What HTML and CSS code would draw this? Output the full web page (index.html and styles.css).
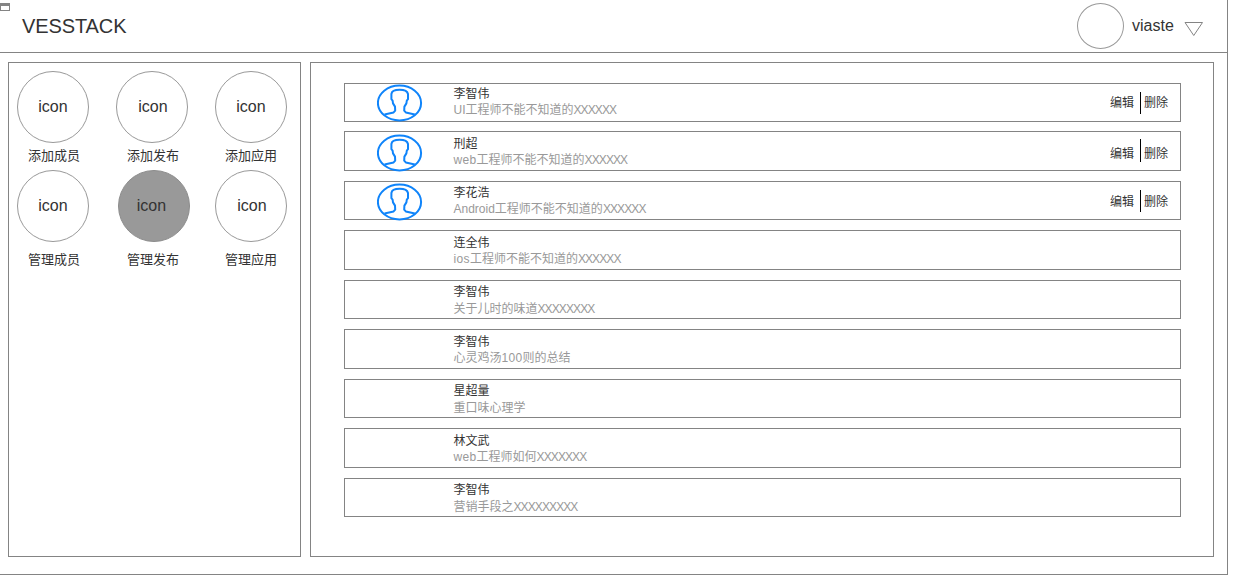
FILE: index.html
```html
<!DOCTYPE html>
<html lang="zh-CN">
<head>
<meta charset="utf-8">
<title>VESSTACK</title>
<link rel="stylesheet" href="styles.css">
</head>
<body>
<svg width="0" height="0" class="defs">
  <symbol id="person" viewBox="0 0 46 38">
    <g fill="none" stroke="#0f84fa" stroke-width="2" stroke-linejoin="round">
      <ellipse cx="22.5" cy="19" rx="21.6" ry="17.4"/>
      <path d="M7.5 30.4 L16.6 28.4 L18.2 26.6 L18 22.6 L16 19.4 L15.6 16.6 L14.4 15.2 L14.4 10 C14.8 7 17.6 5.8 22.6 5.8 C27.6 5.8 30.4 7 31 10 L31 15.2 L29.8 16.6 L29.4 19.4 L27.4 22.6 L27.2 26.6 L28.8 28.4 L37.8 30.4"/>
    </g>
  </symbol>
</svg>
<div class="window">
  <header class="header">
    <span class="window-mark"></span>
    <h1 class="brand">VESSTACK</h1>
    <div class="user">
      <span class="user-avatar"></span>
      <span class="user-name">viaste</span>
      <svg class="caret" width="20" height="16" viewBox="0 0 20 16"><path d="M1 1.5H18.5L9.75 14.5Z" fill="none" stroke="#848484"/></svg>
    </div>
  </header>
  <div class="content">
    <nav class="sidebar">
      <a class="tile"><span class="circle">icon</span><span class="label">添加成员</span></a>
      <a class="tile"><span class="circle nudge">icon</span><span class="label">添加发布</span></a>
      <a class="tile"><span class="circle">icon</span><span class="label">添加应用</span></a>
      <a class="tile"><span class="circle">icon</span><span class="label">管理成员</span></a>
      <a class="tile active"><span class="circle">icon</span><span class="label">管理发布</span></a>
      <a class="tile"><span class="circle nudge">icon</span><span class="label">管理应用</span></a>
    </nav>
    <main class="main">
      <article class="row">
        <svg class="avatar"><use href="#person"/></svg>
        <div class="text"><div class="name">李智伟</div><div class="desc">UI工程师不能不知道的<span class="x">XXXXXX</span></div></div>
        <div class="actions"><a>编辑</a><i class="divider"></i><a>删除</a></div>
      </article>
      <article class="row">
        <svg class="avatar"><use href="#person"/></svg>
        <div class="text"><div class="name">刑超</div><div class="desc"><span class="latin">web</span>工程师不能不知道的<span class="x">XXXXXX</span></div></div>
        <div class="actions"><a>编辑</a><i class="divider"></i><a>删除</a></div>
      </article>
      <article class="row">
        <svg class="avatar"><use href="#person"/></svg>
        <div class="text"><div class="name">李花浩</div><div class="desc">Android工程师不能不知道的<span class="x">XXXXXX</span></div></div>
        <div class="actions"><a>编辑</a><i class="divider"></i><a>删除</a></div>
      </article>
      <article class="row">
        <div class="text"><div class="name">连全伟</div><div class="desc"><span class="latin">ios</span>工程师不能不知道的<span class="x">XXXXXX</span></div></div>
      </article>
      <article class="row">
        <div class="text"><div class="name">李智伟</div><div class="desc">关于儿时的味道<span class="x">XXXXXXXX</span></div></div>
      </article>
      <article class="row">
        <div class="text"><div class="name">李智伟</div><div class="desc">心灵鸡汤<span class="latin">100</span>则的总结</div></div>
      </article>
      <article class="row">
        <div class="text"><div class="name">星超量</div><div class="desc">重口味心理学</div></div>
      </article>
      <article class="row">
        <div class="text"><div class="name">林文武</div><div class="desc"><span class="latin">web</span>工程师如何<span class="x">XXXXXXX</span></div></div>
      </article>
      <article class="row">
        <div class="text"><div class="name">李智伟</div><div class="desc">营销手段之<span class="x">XXXXXXXXX</span></div></div>
      </article>
    </main>
  </div>
</div>
</body>
</html>
```
FILE: styles.css
```css
* { box-sizing: border-box; }
body {
  margin: 0;
  background: #fff;
  color: #333;
  font-family: "Liberation Sans", "Noto Sans CJK SC", sans-serif;
}
.defs { position: absolute; }
.window {
  width: 1228px;
  height: 575px;
  border: solid #848484;
  border-width: 0 1px 1px 0;
}
.header {
  position: relative;
  display: flex;
  justify-content: space-between;
  height: 53px;
  border-bottom: 1px solid #848484;
  padding: 0 23px 0 22px;
}
.window-mark {
  position: absolute;
  left: 0;
  top: 3px;
  width: 10px;
  height: 8px;
  border: 1px solid #848484;
  border-top-width: 3px;
}
.brand {
  margin: 0;
  font-size: 20px;
  font-weight: 400;
  line-height: 52px;
  letter-spacing: -0.1px;
}
.user { display: flex; align-items: center; height: 52px; }
.user-avatar {
  width: 47px;
  height: 46px;
  border: 1px solid #999;
  border-radius: 50%;
}
.user-name { width: 51px; padding-left: 8px; font-size: 16px; line-height: 50px; }
.caret { margin: 5px 0 0 9px; }
.content { display: flex; gap: 9px; padding: 9px 0 0 8px; }
.sidebar {
  display: grid;
  grid-template-columns: repeat(3, 99px);
  grid-template-rows: 99px 110px;
  width: 293px;
  height: 495px;
  padding: 8px 0 0 8px;
  border: 1px solid #848484;
}
.tile { display: flex; flex-direction: column; width: 72px; }
.circle {
  width: 72px;
  height: 72px;
  flex: none;
  border: 1px solid #999;
  border-radius: 50%;
  font-size: 16px;
  line-height: 70px;
  text-align: center;
}
.nudge { padding-left: 2px; }
.label { margin-top: 3px; padding-left: 11px; font-size: 13px; line-height: 20px; white-space: nowrap; }
.tile:nth-child(3n) .label { padding-left: 10px; }
.tile:nth-child(n+4) .label { margin-top: 8px; }
.active .circle { margin-left: 2px; padding-right: 5px; background: #999; border-color: #8c8c8c; }
.main {
  width: 904px;
  height: 495px;
  padding: 20px 32px 0 33px;
  border: 1px solid #848484;
}
.row {
  display: flex;
  height: 39px;
  margin-bottom: 10px;
  padding-left: 32px;
  border: 1px solid #848484;
}
.row:first-child { margin-bottom: 9px; }
.row:nth-child(even) { height: 40px; }
.avatar { width: 46px; height: 38px; margin-right: -46px; flex: none; }
.row:nth-child(2) .avatar { margin-top: 2px; }
.row:nth-child(3) .avatar { margin-top: 1px; }
.text { padding-left: 76.5px; font-size: 12px; line-height: 16px; white-space: nowrap; }
.name { margin-top: 3px; }
.row:first-child .name { margin-top: 2px; }
.row:nth-child(even) .name { margin-top: 4px; }
.desc { color: #999; }
.row:first-child .desc { margin-top: 0; }
.latin { letter-spacing: 0.35px; }
.x { letter-spacing: -0.9px; }
.row:nth-child(n+5):nth-child(odd) .desc { margin-top: 1px; }
.actions {
  display: flex;
  align-items: center;
  margin-left: auto;
  padding-right: 12px;
  font-size: 12px;
  line-height: 16px;
}
.divider { width: 1px; height: 22px; margin: 0 3px 0 6px; background: #000; }
.row:nth-child(2) .actions { padding-top: 5px; }
.row:nth-child(2) .divider { height: 23px; margin-top: -6px; }
.row:nth-child(3) .actions { padding-top: 2px; }
.row:nth-child(3) .divider { margin-top: -2px; }
```
